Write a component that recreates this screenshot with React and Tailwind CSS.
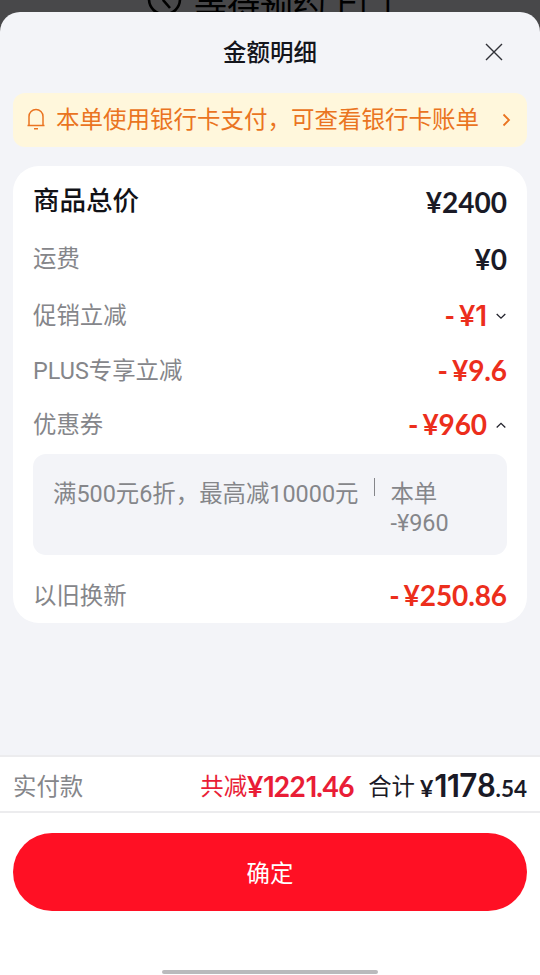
const cjk = "font-[Roboto,'Noto_Sans_CJK_SC',sans-serif]";

// The digit 1 is a plain stem without a foot, on a narrow advance.
function Figures({ text }) {
  return text.split(/(1)/).map((part, i) =>
    part === "1" ? (
      <span key={i} className="font-[Inter,sans-serif] font-semibold tracking-[-1px]">
        1
      </span>
    ) : (
      part
    )
  );
}

function Price({ value, className = "" }) {
  return (
    <span className={`font-[Lato,sans-serif] font-bold whitespace-nowrap ${className}`}>
      <Figures text={value} />
    </span>
  );
}

function Label({ children, className = "" }) {
  return <span className={`pt-[3px] text-[23.4px] ${className}`}>{children}</span>;
}

function Row({ label, children, className }) {
  return (
    <div className={`flex items-center justify-between ${className}`}>
      <Label className="text-[#85868a]">{label}</Label>
      {children}
    </div>
  );
}

function Discount({ value, arrow }) {
  return (
    <div className="flex items-center text-[#ec2e1c]">
      <Price value="-" className="mr-1 text-[28px]" />
      <Price value={value} className="text-[28px] tracking-[-0.1px]" />
      {arrow && (
        <svg
          className={arrow === "down" ? "mt-[2px] ml-[9px] h-3 w-3" : "mt-[2px] ml-2 h-3 w-3"}
          viewBox="0 0 12 12"
          fill="none"
          stroke="#22222c"
          strokeWidth="1.3"
        >
          <path d={arrow === "down" ? "M1.7 4 6 8.200 10.300 4" : "M1.7 8.500 6 4.300 10.300 8.500"} />
        </svg>
      )}
    </div>
  );
}

export default function App() {
  return (
    <div className={`flex h-[975px] w-[540px] flex-col overflow-hidden bg-[#48484a] ${cjk}`}>
      <div className="flex h-3 shrink-0 items-end pl-[147px] text-black">
        <svg
          className="-mb-[7px] h-[36px] w-[36px] shrink-0"
          viewBox="0 0 36 36"
          fill="none"
          stroke="black"
          strokeWidth="2.6"
        >
          <circle cx="17.500" cy="16" r="15.500" />
          <path d="M16.500 7v10.500l6.500 7.500" />
        </svg>
        <span className="-mb-[15px] ml-[11px] text-[33px] leading-[40px] whitespace-nowrap">
          等待预约上门
        </span>
      </div>
      <div className="relative flex flex-1 flex-col overflow-hidden rounded-t-[20px] bg-[#f3f4f8]">
        <header className="grid h-[81px] shrink-0 grid-cols-[1fr_auto_1fr] items-center px-[37px]">
          <h1 className="col-start-2 pt-[2px] text-[23.5px] font-medium text-[#14151c]">
            金额明细
          </h1>
          <svg
            className="-mt-[1px] h-[18px] w-[18px] justify-self-end"
            viewBox="0 0 18 18"
            fill="none"
            stroke="#303138"
            strokeWidth="1.4"
          >
            <path d="M1 1l16 16M17 1L1 17" />
          </svg>
        </header>

        <div className="mx-[13px] flex h-[54px] shrink-0 items-center rounded-[12px] bg-[#fff7dc] pr-[16px] pl-[13px] text-[#ea7421]">
          <svg
            className="-mt-[2px] h-[22px] w-5"
            viewBox="0 0 20 22"
            fill="none"
            stroke="currentColor"
            strokeWidth="1.5"
          >
            <path d="M1.500 17.500h17M3 17.500V8.500a7 7 0 0 1 14 0v9M8 20.700h4" />
          </svg>
          <span className="ml-[10px] pt-[2px] text-[23.5px] whitespace-nowrap">
            本单使用银行卡支付，可查看银行卡账单
          </span>
          <svg
            className="ml-auto h-[14px] w-[9px]"
            viewBox="0 0 9 14"
            fill="none"
            stroke="currentColor"
            strokeWidth="1.8"
          >
            <path d="M1.500 1.500 7 7l-5.500 5.500" />
          </svg>
        </div>

        <section className="mx-[13px] mt-[19px] flex h-[457px] shrink-0 flex-col rounded-[26px] bg-white px-5 pt-[6px]">
          <div className="flex h-[58px] items-center justify-between">
            <span className="text-[26.500px] font-medium text-[#111217]">商品总价</span>
            <Price value="¥2400" className="pt-px text-[28px] text-[#1a1a26]" />
          </div>
          <Row label="运费" className="h-[57px]">
            <Price value="¥0" className="text-[28px] text-[#1a1a26]" />
          </Row>
          <Row label="促销立减" className="h-[56px]">
            <Discount value="¥1" arrow="down" />
          </Row>
          <Row label="PLUS专享立减" className="h-[54px]">
            <Discount value="¥9.6" />
          </Row>
          <Row label="优惠券" className="h-[54px]">
            <Discount value="¥960" arrow="up" />
          </Row>
          <div className="mt-[3px] flex h-[101px] shrink-0 rounded-[13px] bg-[#f3f4f8] pt-[24px] pl-5 text-[23.4px] leading-[30px] text-[#85868a]">
            <span className="pt-px whitespace-nowrap">满500元6折，最高减10000元</span>
            <span className="ml-[16px] h-[18px] w-px bg-[#85868a]" />
            <span className="ml-[15px] w-[60px] pt-[2px] leading-[29px]">
              本单
              <br />
              -¥960
            </span>
          </div>
          <Row label="以旧换新" className="mt-[12px] h-[56px]">
            <Discount value="¥250.86" />
          </Row>
        </section>

        <footer className="mt-auto flex h-[220px] shrink-0 flex-col bg-white">
          <div className="flex h-[58px] items-center border-y-2 border-[#ececee] px-[13px] pt-[4px]">
            <Label className="mr-auto text-[#85868a]">实付款</Label>
            <Label className="text-[#e91d36]">共减</Label>
            <Price value="¥1221.46" className="text-[28px] tracking-[-0.4px] text-[#e91d36]" />
            <Label className="ml-[14px] text-[#1a1a26]">合计</Label>
            <span className="ml-[5px] flex items-baseline text-[#1a1a26]">
              <Price value="¥" className="mr-px text-[23px]" />
              <Price value="1178" className="text-[31.500px]" />
              <Price value=".54" className="text-[22.500px]" />
            </span>
          </div>
          <button className="mx-[13px] mt-5 h-[78px] shrink-0 rounded-full bg-[#ff1024] pt-[6px] text-[23.4px] text-white">
            确定
          </button>
          <div className="mx-auto mt-auto mb-[1px] h-1 w-[216px] rounded-full bg-[#bababc]" />
        </footer>
      </div>
    </div>
  );
}
